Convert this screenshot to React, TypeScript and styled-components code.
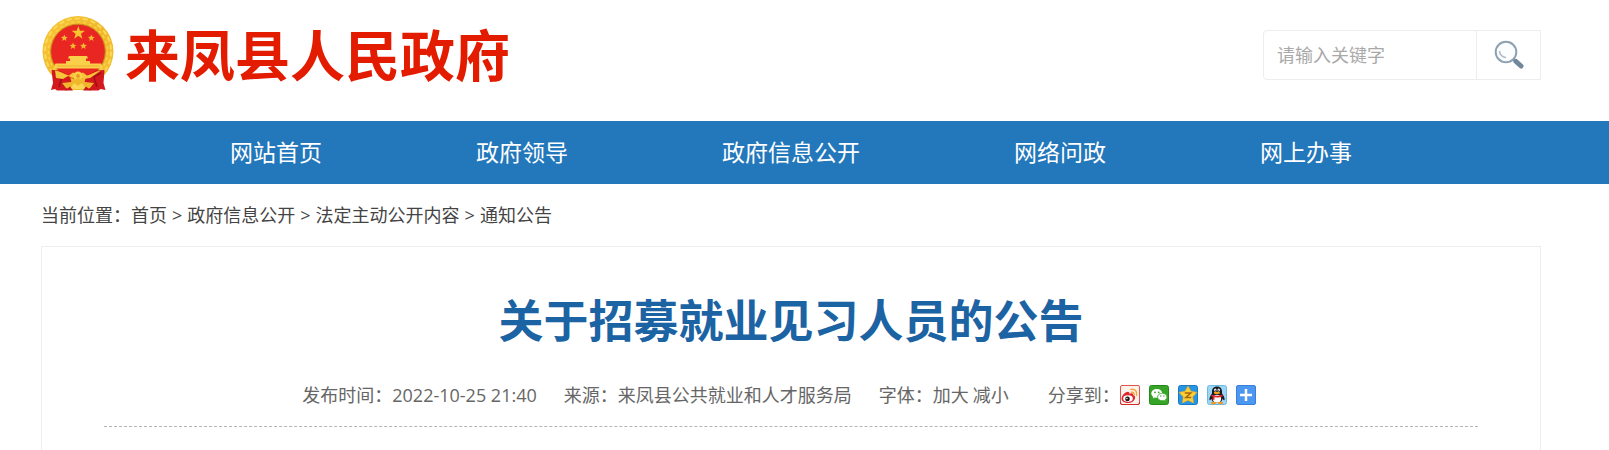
import React from "react";
import styled, { createGlobalStyle } from "styled-components";

const border = "#ededed";

const Global = createGlobalStyle`
  * { box-sizing: border-box; }
  body {
    margin: 0;
    background: #fff;
    font-family: "Open Sans", "Noto Sans CJK SC", sans-serif;
    font-size: 18px;
    line-height: 24px;
    color: #444;
  }
  a { color: inherit; text-decoration: none; }
`;

const Page = styled.div`
  min-height: 100vh;
  display: flex;
  flex-direction: column;
`;

const Header = styled.header`
  display: flex;
  justify-content: space-between;
  align-items: flex-start;
  padding: 16px 68px 30px 41px;
`;

const Brand = styled.a`
  display: flex;
  align-items: flex-start;
  gap: 10px;
  height: 75px;
`;

const SiteName = styled.span`
  font-family: "Noto Sans CJK SC", sans-serif;
  font-size: 55px;
  line-height: 72px;
  font-weight: 700;
  color: #e31c00;
  white-space: nowrap;
`;

const Search = styled.form`
  display: flex;
  width: 278px;
  height: 50px;
  margin-top: 14px;
  border: 1px solid ${border};
  border-radius: 4px 0 0 4px;
`;

const SearchInput = styled.input`
  flex: 1;
  min-width: 0;
  border: 0;
  padding: 0 13px;
  background: transparent;
  font: inherit;
  color: #444;
  outline: none;
  &::placeholder { color: #a9a9a9; opacity: 1; }
`;

const SearchButton = styled.button`
  width: 64px;
  border: 0;
  border-left: 1px solid ${border};
  padding: 0;
  background: transparent;
  display: flex;
  align-items: center;
  justify-content: center;
  cursor: pointer;
`;

const Nav = styled.nav`
  display: flex;
  justify-content: center;
  gap: 154px;
  padding: 0 68px 0 41px;
  background: #2377bb;
`;

const NavLink = styled.a`
  color: #fff;
  font-size: 23px;
  line-height: 63px;
  white-space: nowrap;
`;

const Main = styled.main`
  flex: 1;
  display: flex;
  flex-direction: column;
  padding: 0 68px 0 41px;
`;

const Crumbs = styled.nav`
  display: flex;
  gap: 5px;
  line-height: 62px;
`;

const Article = styled.article`
  flex: 1;
  border: 1px solid ${border};
  border-bottom: 0;
  padding: 40px 62px 0;
`;

const Title = styled.h1`
  margin: 0;
  text-align: center;
  font-size: 45px;
  line-height: 68px;
  font-weight: 700;
  color: #1c63a3;
`;

const Meta = styled.div`
  display: flex;
  justify-content: center;
  gap: 27px;
  padding: 28px 24px 19px 0;
  border-bottom: 1px dashed #b5b5b5;
  color: #666;
  white-space: nowrap;
`;

const SizeButton = styled.button`
  border: 0;
  padding: 0;
  margin-right: 4px;
  background: none;
  font: inherit;
  color: inherit;
  cursor: pointer;
`;

const Share = styled.div`
  display: flex;
  align-items: center;
  padding-left: 8px;
`;

const ShareList = styled.div`
  display: flex;
  gap: 9px;
`;

const ShareLink = styled.a`
  display: block;
  width: 20px;
  height: 20px;

  svg { display: block; }
`;

const starPoints = (cx: number, cy: number, r: number, inner = 0.4) =>
  Array.from({ length: 10 }, (_, i) => {
    const a = (Math.PI / 5) * i - Math.PI / 2;
    const d = i % 2 ? r * inner : r;
    return `${(cx + d * Math.cos(a)).toFixed(2)},${(cy + d * Math.sin(a)).toFixed(2)}`;
  }).join(" ");

const Emblem = () => (
  <svg width="74" height="75" viewBox="0 0 74 75" aria-hidden="true">
    <defs>
      <linearGradient id="gold" x1="0" y1="0" x2="1" y2="1">
        <stop offset="0" stopColor="#f8c93a" />
        <stop offset="0.5" stopColor="#f0b62a" />
        <stop offset="1" stopColor="#f3c437" />
      </linearGradient>
    </defs>
    <circle cx="37" cy="35.500" r="35.500" fill="url(#gold)" />
    <circle cx="37" cy="35.500" r="33" fill="none" stroke="#fbd957" strokeWidth="2" strokeDasharray="5 3" />
    <circle cx="37" cy="35.500" r="29.500" fill="none" stroke="#fad24c" strokeWidth="1.500" strokeDasharray="3 3" />
    <circle cx="37" cy="35.500" r="27.300" fill="#ea2622" stroke="#c98a1a" strokeWidth="1" />
    <polygon points={starPoints(37.3, 17, 7)} fill="#f7c52f" />
    {[[23.3, 22], [50.3, 22], [32, 30], [42.5, 30]].map(([x, y]) => (
      <polygon key={x} points={starPoints(x, y, 3.6, 0.45)} fill="#f3bb32" />
    ))}
    <path d="M28 40h18l1 2.500h-2V45h4v2.500H60l1.500 3v2H13v-2l1.500-3H25V45h4v-2.500h-2z" fill="#fad04a" />
    <path d="M16 50h43" stroke="#f0b030" strokeWidth="1" />
    <path d="M10.500 54l9 .5 9 4.500 2 7-5 8.500H16l-2-1.500-4 1 2-7z" fill="#d3191d" />
    <path d="M63.500 54l-9 .5-9 4.500-2 7 5 8.500h9l2-1.500 5 1-2-7z" fill="#d3191d" />
    <path d="M14 57l7 4-3 10M60 57l-7 4 3 10" fill="none" stroke="#9f1015" strokeWidth="1.500" />
    <path d="M18 54h38l-8 4.500H26z" fill="#e92a22" />
    <path d="M14 54.500c6 1 10 4 14 5l4-3 5 2 5-2 4 3c4-1 8-4 14-5l-11 7.500-7 1-5-3-5 2-5-2-5 3-7-1z" fill="#f7c638" />
    <circle cx="37" cy="60" r="4.500" fill="#fad04a" />
    <circle cx="37" cy="60" r="2" fill="#e99c22" />
    <path d="M21 67l9-1 7-4 7 4 9 1-4 5-7 2H32l-7-2z" fill="#f1b72c" />
    <path d="M29 73l4-6 4 3 4-3 4 6z" fill="#fbd654" />
    <path d="M24 74.500l5-4 3 4zM50 74.500l-5-4-3 4z" fill="#c5161a" />
  </svg>
);

const Magnifier = () => (
  <svg width="30" height="30" viewBox="0 0 30 30" aria-hidden="true">
    <circle cx="12" cy="12" r="10.300" fill="#fcfdfe" stroke="#8ea1b1" strokeWidth="2" />
    <path d="M5.500 11c.4 4 2.800 6 6.500 6.500" fill="none" stroke="#aab8c4" strokeWidth="1.500" />
    <path d="M19 19l3 3" stroke="#8ea1b1" strokeWidth="2.500" />
    <path d="M22 21.500l5 4.500" stroke="#71889a" strokeWidth="5" strokeLinecap="round" />
  </svg>
);

const Weibo = () => (
  <svg width="20" height="20" viewBox="0 0 20 20" aria-hidden="true">
    <rect x="0.500" y="0.500" width="19" height="19" rx="1.500" fill="#fdf3ec" stroke="#e2564a" />
    <path d="M0.500 17v1a1.500 1.500 0 0 0 1.500 1.500h16a1.500 1.500 0 0 0 1.500-1.500v-1" fill="none" stroke="#d92b26" />
    <path d="M1.500 13.500C2 10 5.500 6.800 8 6.800c1.400 0 1.600 1 1.300 2 2-.8 4-.7 3.700 1.200 2 .5 2.500 2 2 3.500C14 16.500 11 18 8 18s-6.500-1.500-6.500-4.500z" fill="#dc2630" />
    <ellipse cx="8" cy="13.600" rx="4.800" ry="3.300" fill="#fff" />
    <circle cx="7.500" cy="13.900" r="2.300" fill="#241416" />
    <circle cx="6.900" cy="13.500" r="0.700" fill="#fff" />
    <path d="M11 4.500c3.600-1 6.500 2 5.500 5.800M11.500 7.300c1.700-.4 2.900.8 2.500 2.500" fill="none" stroke="#f6a43b" strokeWidth="1.500" strokeLinecap="round" />
  </svg>
);

const WeChat = () => (
  <svg width="20" height="20" viewBox="0 0 20 20" aria-hidden="true">
    <rect x="0.500" y="0.500" width="19" height="19" rx="2" fill="#36a426" stroke="#26871b" />
    <path d="M7.800 4C4.700 4 2.300 6 2.300 8.400c0 1.400.8 2.500 2 3.300l-.5 1.700 2-1c.7.2 1.300.3 2 .3 3 0 5.500-1.900 5.500-4.300S10.900 4 7.800 4z" fill="#fff" />
    <path d="M13.300 8.200c-2.700 0-4.700 1.700-4.700 3.800s2 3.700 4.700 3.700c.6 0 1.100-.1 1.600-.2l1.700.9-.4-1.500c1.100-.7 1.800-1.700 1.800-2.900 0-2.100-2.100-3.800-4.700-3.800z" fill="#fff" stroke="#36a426" strokeWidth="0.800" />
    <g fill="#36a426"><circle cx="6" cy="7.300" r="0.900" /><circle cx="9.700" cy="7.300" r="0.900" /><circle cx="11.800" cy="11" r="0.700" /><circle cx="14.900" cy="11" r="0.700" /></g>
  </svg>
);

const Qzone = () => (
  <svg width="20" height="20" viewBox="0 0 20 20" aria-hidden="true">
    <rect x="0.500" y="0.500" width="19" height="19" rx="2" fill="#2795e2" stroke="#1879c4" />
    <polygon points={starPoints(10, 10.3, 9.4, 0.53)} fill="#fdcf35" stroke="#f5ab19" strokeWidth="0.600" strokeLinejoin="round" />
    <path d="M6.800 8h6l-5 4.500h5.500" fill="none" stroke="#a7660c" strokeWidth="1.500" />
  </svg>
);

const QQ = () => (
  <svg width="20" height="20" viewBox="0 0 20 20" aria-hidden="true">
    <rect x="0.500" y="0.500" width="19" height="19" rx="2" fill="#9bd6f5" stroke="#6fb8e3" />
    <path d="M10 1.500c-3.300 0-5 2.300-5 5v2C3.500 10.500 2 13 2.500 15c.5.500 1.500-.5 2-1.200.5 3 2.500 4.200 5.500 4.200s5-1.200 5.500-4.200c.5.700 1.500 1.700 2 1.200.5-2-1-4.500-2.500-6.500v-2c0-2.700-1.700-5-5-5z" fill="#181b20" />
    <ellipse cx="10" cy="13.800" rx="4.100" ry="4" fill="#fff" />
    <ellipse cx="8.300" cy="5" rx="1.200" ry="1.600" fill="#fff" /><ellipse cx="11.700" cy="5" rx="1.200" ry="1.600" fill="#fff" />
    <circle cx="8.600" cy="5.200" r="0.500" fill="#111" /><circle cx="11.400" cy="5.200" r="0.500" fill="#111" />
    <ellipse cx="10" cy="7.900" rx="3.200" ry="1.100" fill="#f7a51d" />
    <path d="M4.500 9.500c3.500 1.700 7.500 1.700 11 0l.3 1.700c-1.800.9-3.600 1.300-5.800 1.300v0l-2.500-.2v2.500H5.700v-3L4.200 11.200z" fill="#e2282b" />
    <ellipse cx="6.500" cy="18" rx="2.700" ry="1.200" fill="#f49a1b" /><ellipse cx="13.500" cy="18" rx="2.700" ry="1.200" fill="#f49a1b" />
  </svg>
);

const More = () => (
  <svg width="20" height="20" viewBox="0 0 20 20" aria-hidden="true">
    <rect x="0.500" y="0.500" width="19" height="19" rx="1.500" fill="#4c97f0" stroke="#3b7fd8" />
    <path d="M10 4v12M4 10h12" stroke="#fff" strokeWidth="2.500" />
  </svg>
);

const shares = [
  { label: "新浪微博", Icon: Weibo },
  { label: "微信", Icon: WeChat },
  { label: "QQ空间", Icon: Qzone },
  { label: "QQ好友", Icon: QQ },
  { label: "更多", Icon: More },
];

export default function App() {
  return (
    <Page>
      <Global />
      <Header>
        <Brand href="#">
          <Emblem />
          <SiteName>来凤县人民政府</SiteName>
        </Brand>
        <Search>
          <SearchInput type="text" aria-label="请输入关键字" placeholder="请输入关键字" />
          <SearchButton type="button" aria-label="搜索"><Magnifier /></SearchButton>
        </Search>
      </Header>
      <Nav>
        {["网站首页", "政府领导", "政府信息公开", "网络问政", "网上办事"].map((t) => (
          <NavLink href="#" key={t}>{t}</NavLink>
        ))}
      </Nav>
      <Main>
        <Crumbs>
          <span>当前位置：<a href="#">首页</a></span>
          <span>&gt;</span>
          <a href="#">政府信息公开</a>
          <span>&gt;</span>
          <a href="#">法定主动公开内容</a>
          <span>&gt;</span>
          <a href="#">通知公告</a>
        </Crumbs>
        <Article>
          <Title>关于招募就业见习人员的公告</Title>
          <Meta>
            <span>发布时间：2022-10-25 21:40</span>
            <span>来源：来凤县公共就业和人才服务局</span>
            <span>字体：<SizeButton type="button">加大</SizeButton><SizeButton type="button">减小</SizeButton></span>
            <Share>
              分享到：
              <ShareList>
                {shares.map(({ label, Icon }) => (
                  <ShareLink href="#" key={label} aria-label={label}><Icon /></ShareLink>
                ))}
              </ShareList>
            </Share>
          </Meta>
        </Article>
      </Main>
    </Page>
  );
}
